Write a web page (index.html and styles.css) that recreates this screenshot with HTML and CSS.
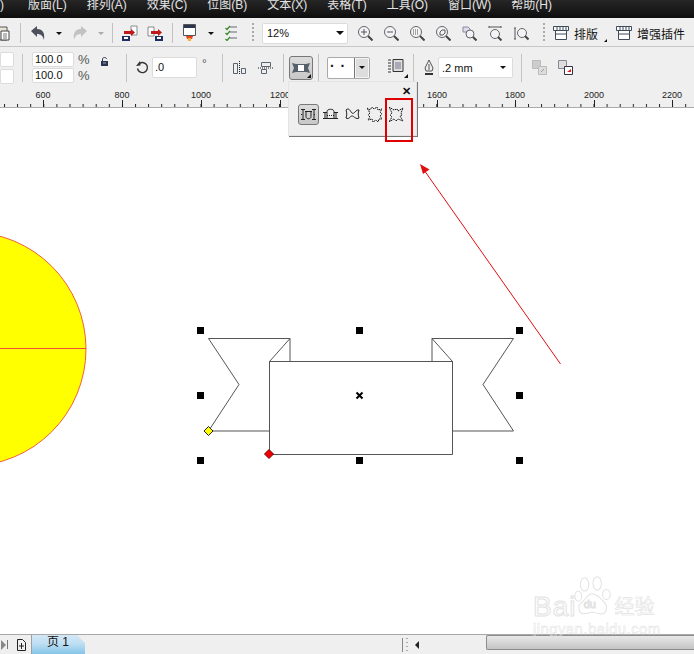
FILE: index.html
```html
<!DOCTYPE html>
<html lang="zh-CN">
<head>
  <meta charset="UTF-8">
  <title>CorelDRAW 变形工具</title>
  <link rel="stylesheet" href="styles.css">
</head>
<body>
  <div class="app">
    <!-- 菜单栏 -->
    <div class="menubar">
      <span class="first">V)</span>
      <span>版面(L)</span>
      <span>排列(A)</span>
      <span>效果(C)</span>
      <span>位图(B)</span>
      <span>文本(X)</span>
      <span>表格(T)</span>
      <span>工具(O)</span>
      <span>窗口(W)</span>
      <span>帮助(H)</span>
    </div>

    <!-- 标准工具栏 -->
    <div class="toolbar top">
      <div class="group g-paste">
        <svg width="10" height="16" viewBox="0 0 10 16"><path d="M-6 2h13v13H-6z" fill="#e8e4d8" stroke="#555"/><path d="M1 6h8v9H1z" fill="#fff" stroke="#444"/><path d="M3 9h4M3 11h4M3 13h4" stroke="#777"/></svg>
      </div>
      <i class="sep"></i>
      <div class="group g-undo">
        <svg width="16" height="16" viewBox="0 0 16 16"><path d="M1 6l6-5v3c6 0 8 4 7 11-1-4-3-6-7-6v3z" fill="#4d4f5c"/></svg>
        <i class="drop"></i>
        <svg width="16" height="16" viewBox="0 0 16 16"><path d="M15 6L9 1v3C3 4 1 8 2 15c1-4 3-6 7-6v3z" fill="#c2c2c2"/></svg>
        <i class="drop off"></i>
      </div>
      <i class="sep"></i>
      <div class="group g-exp">
        <svg width="17" height="17" viewBox="0 0 17 17"><path d="M10 1h6v9h-6z" fill="#fff" stroke="#888"/><path d="M1 11h8v5H1z" fill="#1e2f66"/><path d="M3 12h4v2H3z" fill="#fff"/><path d="M3 6h7V4l4 3.500-4 3.500V9H3z" fill="#c01818"/></svg>
        <svg width="17" height="17" viewBox="0 0 17 17"><path d="M1 2h6v9H1z" fill="#fff" stroke="#888"/><path d="M8 11h8v5H8z" fill="#1e2f66"/><path d="M10 12h4v2h-4z" fill="#fff"/><path d="M4 6h7V4l4 3.500-4 3.500V9H4z" fill="#c01818"/></svg>
      </div>
      <i class="sep"></i>
      <div class="group g-pub">
        <svg width="13" height="18" viewBox="0 0 13 18"><path d="M.5.500h12v11H.5z" fill="#fff" stroke="#555"/><path d="M1 1h11v3H1z" fill="#2c3550"/><path d="M3 12h7l-1 3H4z" fill="#e8431a"/><path d="M5 14h3v3H5z" fill="#f5b13c"/></svg>
        <i class="drop"></i>
        <svg width="12" height="16" viewBox="0 0 12 16" fill="none"><path d="M5 2h7M5 7h7M5 13h7" stroke="#667"/><path d="M.5 3l1.500 1.500L5 1M.5 8l1.500 1.500L5 6M.5 14l1.500 1.500L5 12" stroke="#3d8a2a" stroke-width="1.300"/></svg>
      </div>
      <i class="grip"></i>
      <div class="combo zoom-combo">
        <span>12%</span>
        <i class="drop big"></i>
      </div>
      <div class="group g-zoom">
        <svg class="lens" viewBox="0 0 15 15"><circle cx="6" cy="6" r="5.500"/><path class="h" d="M10 10l4.500 4.500"/><path class="d" d="M3 6h6M6 3v6"/></svg>
        <svg class="lens" viewBox="0 0 15 15"><circle cx="6" cy="6" r="5.500"/><path class="h" d="M10 10l4.500 4.500"/><path class="d" d="M3 6h6"/></svg>
        <svg class="lens" viewBox="0 0 15 15"><circle cx="6" cy="6" r="5.500"/><path class="h" d="M10 10l4.500 4.500"/><path class="d dots" d="M3 4h6M3 6h6M3 8h6"/></svg>
        <svg class="lens" viewBox="0 0 15 15"><circle cx="6" cy="6" r="5.500"/><path class="h" d="M10 10l4.500 4.500"/><path class="d" d="M4 6l2-2 3 0 0 3-2 2-3 0z"/></svg>
        <svg class="lens" viewBox="0 0 15 15"><path d="M1 1h5l2 2v3H1z" fill="#dde" stroke="#889"/><circle cx="8" cy="8" r="4"/><path class="h" d="M11 11l3.500 3.500"/></svg>
        <svg class="lens" viewBox="0 0 15 15"><path class="d" d="M1 1h12M1 0v2M13 0v2"/><circle cx="7" cy="8" r="4.500"/><path class="h" d="M10 11l3.500 3.500"/></svg>
        <svg class="lens" viewBox="0 0 15 15"><path class="d" d="M1 2v11M0 2h2M0 13h2"/><circle cx="8" cy="7" r="4.500"/><path class="h" d="M11 10l3.500 3.500"/></svg>
      </div>
      <i class="grip"></i>
      <div class="group g-plug">
        <svg width="16" height="15" viewBox="0 0 16 15"><path d="M.5.500h15v4H.5zM2.500 4.500h11v9h-11z" fill="#fff" stroke="#3f4a5a"/><path d="M4 1v3M7 1v3M10 1v3M13 1v3M3 8h10" stroke="#3f4a5a"/></svg>
        <span class="plug-text">排版</span>
        <i class="corner"></i>
        <svg width="16" height="15" viewBox="0 0 16 15"><path d="M.5.500h15v4H.5zM2.500 4.500h11v9h-11z" fill="#fff" stroke="#3f4a5a"/><path d="M4 1v3M7 1v3M10 1v3M13 1v3M3 8h10" stroke="#3f4a5a"/></svg>
        <span class="plug-text">增强插件</span>
      </div>
    </div>

    <!-- 属性栏 -->
    <div class="toolbar props">
      <div class="group g-pos">
        <b class="field stub"></b>
        <b class="field stub"></b>
      </div>
      <i class="sep tall"></i>
      <div class="group g-scale">
        <div class="stack">
          <b class="field pct">100.0</b>
          <b class="field pct">100.0</b>
        </div>
        <div class="stack units">
          <span>%</span>
          <span>%</span>
        </div>
        <svg class="lock" width="9" height="9" viewBox="0 0 9 9"><path d="M1 4h7v5H1z" fill="#2c3550"/><path d="M2.500 4V2c0-2 4-2 4 0" fill="none" stroke="#2c3550"/><path d="M3 6h3" stroke="#9ab"/></svg>
      </div>
      <i class="sep tall"></i>
      <div class="group g-rot">
        <svg width="13" height="13" viewBox="0 0 13 13" fill="none"><path d="M3.500 2.500a5 5 0 1 1-2 5" stroke="#333" stroke-width="1.400"/><path d="M0 5l4.500-.500L4 0z" fill="#333"/></svg>
        <b class="field angle">.0</b>
        <span class="deg">°</span>
      </div>
      <i class="sep tall"></i>
      <div class="group g-mirror">
        <svg width="15" height="14" viewBox="0 0 15 14" fill="none" stroke="#5a6470"><path d="M1.500 2.500h4v10h-4zM9.500 7.500h4v5h-4z"/><path d="M7.500 0v14" stroke="#222" stroke-dasharray="1 1"/></svg>
        <svg width="15" height="14" viewBox="0 0 15 14" fill="none" stroke="#5a6470"><path d="M3.500 1.500h9v4h-9zM3.500 8.500h5v4h-5z"/><path d="M0 7h15" stroke="#222" stroke-dasharray="1 1"/></svg>
      </div>
      <i class="sep tall"></i>
      <div class="press">
        <svg width="20" height="14" viewBox="0 0 20 14"><path d="M1 2l4 1h10l4-1-2 5 2 5-4-1H5l-4 1 2-5z" fill="#55606a"/><path d="M7 4h6v6H7z" fill="#fff"/></svg>
        <i class="corner dark"></i>
      </div>
      <i class="sep tall"></i>
      <div class="line-combo">
        <span class="dots-box">· ·</span>
        <span class="line-btn"><i class="drop"></i></span>
      </div>
      <div class="style-btn">
        <svg width="16" height="15" viewBox="0 0 16 15"><path d="M0 1h3M0 4h3M0 7h3M0 10h3M0 13h3" stroke="#333"/><path d="M5 .500h10v12H5z" fill="#ddd" stroke="#333"/><path d="M7 3h6v7H7z" fill="#aab"/></svg>
        <i class="corner dark"></i>
      </div>
      <i class="sep tall"></i>
      <svg class="pen" width="10" height="17" viewBox="0 0 10 17" fill="none"><path d="M5 1l4 8-1 3H2L1 9z" fill="#eee" stroke="#555"/><path d="M5 5v6" stroke="#555"/><path d="M1 15h8" stroke="#333" stroke-width="2"/></svg>
      <div class="combo width-combo">
        <span>.2 mm</span>
        <i class="drop"></i>
      </div>
      <i class="sep tall"></i>
      <div class="group g-order">
        <svg width="15" height="15" viewBox="0 0 15 15"><path d="M.5.500h8v8h-8z" fill="#ccc" stroke="#bbb"/><path d="M6.500 6.500h8v8h-8z" fill="#ddd" stroke="#bbb"/><path d="M9 12l3-3" stroke="#999"/></svg>
        <svg width="15" height="15" viewBox="0 0 15 15"><path d="M.5.500h8v8h-8z" fill="#ddd" stroke="#889"/><path d="M6.500 6.500h8v8h-8z" fill="#fff" stroke="#334"/><path d="M9 12h4V9z" fill="#e02020"/></svg>
      </div>
    </div>

    <!-- 标尺 -->
    <svg class="ruler" width="694" height="20" viewBox="0 0 694 20">
      <defs>
        <pattern id="ticks" x="4" y="0" width="13.1" height="20" patternUnits="userSpaceOnUse">
          <path d="M.5 16v3" stroke="#222"/>
        </pattern>
      </defs>
      <path d="M0 0h694v20H0z" fill="#efefef"/>
      <path d="M0 0h694v20H0z" fill="url(#ticks)"/>
      <path d="M0 19.500h694" stroke="#aaa"/>
      <path d="M43.500 12v7M122.500 12v7M201.500 12v7M280.500 12v7M437.500 12v7M515.500 12v7M594.500 12v7M672.500 12v7" stroke="#222"/>
      <g class="ruler-text">
        <text x="43" y="10">600</text>
        <text x="122" y="10">800</text>
        <text x="201" y="10">1000</text>
        <text x="280" y="10">1200</text>
        <text x="437" y="10">1600</text>
        <text x="515" y="10">1800</text>
        <text x="594" y="10">2000</text>
        <text x="672" y="10">2200</text>
      </g>
    </svg>

    <!-- 绘图区 -->
    <svg class="canvas" width="694" height="526" viewBox="0 108 694 526">
      <circle cx="-31" cy="349" r="117" fill="#ffff00" stroke="#f0603a"/>
      <path d="M0 348.500h86" stroke="#f0503a"/>

      <g fill="#fff" stroke="#555">
        <path d="M208.500 338.500H290v23h-20.500V431h-61l30.500-46.500z"/>
        <path d="M513.500 338.500H432v23h20.500V431h61L483 384.500z"/>
        <path d="M269.500 361.500L290 338.500M452.500 361.500L432 338.500" fill="none"/>
        <path d="M269.500 361.500h183v93h-183z"/>
      </g>

      <g fill="#000">
        <path d="M197 327h7v7h-7zM356 327h7v7h-7zM516 327h7v7h-7zM197 392h7v7h-7zM516 392h7v7h-7zM197 457h7v7h-7zM356 457h7v7h-7zM516 457h7v7h-7z"/>
      </g>
      <path d="M356.500 392.500l6 6M362.500 392.500l-6 6" stroke="#000" stroke-width="2"/>
      <path d="M208.500 426.500l4.500 4.500-4.500 4.500-4.500-4.500z" fill="#ffff00" stroke="#222"/>
      <path d="M269 449.500l4.500 4.500-4.500 4.500-4.500-4.500z" fill="#f00000" stroke="#700"/>

      <path d="M560.500 364L424 170" stroke="#e01010"/>
      <path d="M420 164l9.500 5.500-6.500 4.500z" fill="#e01010"/>
    </svg>

    <!-- 页面标签栏 -->
    <div class="statusbar">
      <i class="play"></i>
      <i class="play-bar"></i>
      <svg class="add-page" width="9" height="12" viewBox="0 0 9 12" fill="none" stroke="#222"><path d="M.500.500h5l3 3v8h-8z"/><path d="M4.500 4v6M2 7h5"/></svg>
      <div class="page-tab">页 1</div>
      <div class="hscroll">
        <i class="hgrip"></i>
        <i class="harrow"></i>
        <div class="hthumb"></div>
      </div>
    </div>

    <!-- 弹出的变形面板 -->
    <div class="popup">
      <span class="popup-close">✕</span>
      <div class="popup-row">
        <span class="popup-btn active">
          <svg width="17" height="14" viewBox="0 0 17 14" fill="none" stroke="#222"><path d="M1 1.500h4M12 1.500h4M3 1.500v10M14 1.500v10M1 11.500h4M12 11.500h4"/><path d="M5 3.500h7M6 3.500v5c0 3 5 3 5 0v-5"/><path d="M1 6.500h2M14 6.500h2" stroke-dasharray="1 1"/></svg>
        </span>
        <span class="popup-btn">
          <svg width="15" height="13" viewBox="0 0 15 13" fill="none" stroke="#222"><path d="M0 4.500h4M11 4.500h4M2 4.500v6M13 4.500v6M0 10.500h15"/><path d="M4 10.500v-7c0-3 7-3 7 0v7"/><path d="M4 7.500h7" stroke-dasharray="1 1"/></svg>
        </span>
        <span class="popup-btn">
          <svg width="15" height="15" viewBox="0 0 15 15" fill="none" stroke="#222"><path d="M1 3c3-3 4 1 6 3s4-4 7-3c-1 3-1 5 0 8-3 2-5-2-7-2s-3 4-6 2c1-3 1-5 0-8z"/></svg>
        </span>
        <span class="popup-btn">
          <svg width="15" height="15" viewBox="0 0 15 15" fill="none" stroke="#111" stroke-dasharray="1.500 .7"><path d="M0 1l3 2 2-3 2 2 3-2 1 3 4-1-2 3 2 2-2 2 2 3-3 0-1 3-2-2-3 2-1-3-4 1 2-3-2-2 2-2z"/></svg>
        </span>
        <span class="popup-btn">
          <svg width="15" height="15" viewBox="0 0 15 15" fill="none" stroke="#111" stroke-dasharray="1.500 .7"><path d="M0 0l5 3 3-1 1 2 5-3-2 5 1 2-2 1 3 5-5-2-2 2-2-2-5 3 3-5-2-2 2-2z"/></svg>
        </span>
      </div>
    </div>

    <!-- 红色标注框 -->
    <div class="mark"></div>

    <!-- 水印 -->
    <div class="watermark">
      <div class="wm-logo">
        <span class="wm-bai">Bai</span>
        <svg class="wm-paw" width="38" height="42" viewBox="0 0 44 50" fill="none" stroke="#e2e2e2" stroke-width="1.200">
          <ellipse cx="12" cy="10" rx="5" ry="8"/>
          <ellipse cx="27" cy="9" rx="5" ry="8"/>
          <ellipse cx="4.500" cy="24" rx="4" ry="6"/>
          <ellipse cx="38" cy="22" rx="4.500" ry="6"/>
          <path d="M21 21c-6 0-8 8-13 11s-3 13 3 13 7-2 10-2 7 3 12 2 7-9 3-13-8-11-15-11z"/>
          <text x="11" y="38">du</text>
        </svg>
        <span class="wm-cn">经验</span>
      </div>
      <div class="wm-url">jingyan.baidu.com</div>
    </div>
  </div>
</body>
</html>
```

FILE: styles.css
```css
* {
  box-sizing: border-box;
}
html, body {
  margin: 0;
  padding: 0;
  background: #fff;
}
.app {
  position: relative;
  width: 694px;
  height: 654px;
  overflow: hidden;
  display: flex;
  flex-direction: column;
  font-family: "Liberation Sans", "Noto Sans CJK SC", sans-serif;
  color: #111;
}
i, b {
  display: block;
  font-style: normal;
  font-weight: normal;
  flex: none;
}
svg {
  display: block;
  flex: none;
}

/* 菜单栏 */
.menubar {
  height: 18px;
  flex: none;
  display: flex;
  gap: 20px;
  overflow: hidden;
  background: linear-gradient(#262626, #0e0e0e);
  color: #e4e4e4;
  font-size: 12px;
  line-height: 10px;
  white-space: nowrap;
}
.menubar .first {
  margin-left: -8px;
  margin-right: 4px;
}

/* 工具栏 */
.toolbar {
  flex: none;
  display: flex;
  align-items: center;
  background: #efefef;
}
.toolbar.top {
  height: 29px;
  padding-top: 2px;
  border-bottom: 1px solid #c6c6c6;
}
.toolbar.props {
  height: 41px;
}
.group {
  display: flex;
  align-items: center;
}
.sep {
  width: 1px;
  height: 20px;
  background: #c2c2c2;
}
.sep.tall {
  height: 28px;
}
.grip {
  width: 2px;
  height: 20px;
  margin-left: 15px;
  background: repeating-linear-gradient(#aaa 0 2px, transparent 2px 4px);
}
.g-zoom + .grip {
  margin-left: 14px;
}
.drop {
  width: 0;
  height: 0;
  border-left: 3px solid transparent;
  border-right: 3px solid transparent;
  border-top: 3px solid #111;
}
.drop.off {
  border-top-color: #aaa;
}
.drop.big {
  border-left-width: 4px;
  border-right-width: 4px;
  border-top-width: 4px;
}
.corner {
  width: 0;
  height: 0;
  border-left: 4px solid transparent;
  border-bottom: 4px solid #111;
}
.combo, .field, .line-combo {
  background: #fff;
  border: 1px solid #dcdcdc;
  border-radius: 2px;
  font-size: 11px;
}
.combo {
  display: flex;
  align-items: center;
  justify-content: space-between;
}

/* 标准工具栏 */
.g-paste {
  width: 20px;
}
.g-undo {
  padding: 0 9px;
  gap: 10px;
  width: 91px;
}
.g-exp {
  padding-left: 8px;
  gap: 9px;
  width: 59px;
}
.g-pub {
  padding-left: 10px;
  gap: 12px;
}
.g-pub .drop {
  margin-right: -1px;
}
.zoom-combo {
  width: 86px;
  height: 21px;
  margin-left: 8px;
  padding: 0 3px 0 4px;
}
.g-zoom {
  gap: 11px;
  margin-left: 10px;
}
.lens {
  width: 15px;
  height: 15px;
  fill: none;
}
.lens circle {
  stroke: #666;
  fill: #f4f4f8;
}
.lens .h {
  stroke: #444;
  stroke-width: 2;
}
.lens .d {
  stroke: #555;
}
.lens .dots {
  stroke-dasharray: 1 1;
}
.g-plug {
  margin-left: 8px;
}
.plug-text {
  margin-left: 5px;
  font-size: 12px;
  white-space: nowrap;
}
.g-plug .corner {
  align-self: flex-end;
  margin: 0 9px 0 6px;
  border-width: 0 0 3px 3px;
}

/* 属性栏 */
.g-pos {
  width: 22px;
  flex-direction: column;
  align-items: flex-start;
  gap: 2px;
}
.stub {
  width: 14px;
  height: 15px;
}
.g-scale {
  padding-left: 9px;
  width: 103px;
}
.stack {
  display: flex;
  flex-direction: column;
  gap: 1px;
}
.field.pct {
  width: 42px;
  height: 15px;
  padding-left: 2px;
  line-height: 13px;
}
.units {
  margin-left: 4px;
  color: #555;
  font-size: 13px;
  line-height: 15px;
}
.lock {
  margin: 0 0 13px 10px;
}
.g-rot {
  padding-left: 9px;
  width: 95px;
}
.field.angle {
  width: 45px;
  height: 21px;
  margin-left: 3px;
  padding-left: 2px;
  line-height: 19px;
}
.deg {
  margin-left: 5px;
  color: #555;
  font-size: 12px;
  line-height: 12px;
  margin-top: -8px;
}
.g-mirror {
  padding-left: 9px;
  gap: 11px;
  width: 60px;
}
.press {
  position: relative;
  width: 24px;
  height: 24px;
  margin: 0 5px;
  display: flex;
  align-items: center;
  justify-content: center;
  background: linear-gradient(#dcdcdc, #c8c8c8);
  border: 1px solid #777;
  border-radius: 3px;
}
.corner.dark {
  position: absolute;
  right: 1px;
  bottom: 1px;
}
.line-combo {
  display: flex;
  width: 43px;
  height: 22px;
  margin-left: 8px;
  border-color: #aaa;
}
.dots-box {
  width: 26px;
  padding-left: 2px;
  font-size: 14px;
  font-weight: bold;
  line-height: 17px;
  letter-spacing: 1px;
}
.line-btn {
  flex: 1;
  display: flex;
  align-items: center;
  justify-content: center;
  background: #ddd;
  border-left: 1px solid #777;
  box-shadow: inset 0 0 0 1px #f4f4f4;
}
.style-btn {
  position: relative;
  width: 20px;
  height: 20px;
  margin: 0 5px 0 18px;
  padding-top: 1px;
}
.style-btn .corner.dark {
  right: 0;
  bottom: 0;
}
.pen {
  margin-left: 10px;
}
.width-combo {
  width: 75px;
  height: 21px;
  margin: 0 8px 0 4px;
  padding: 0 6px 0 3px;
}
.g-order {
  padding-left: 10px;
  gap: 11px;
}

/* 标尺 */
.ruler {
  flex: none;
}
.ruler-text {
  font-size: 9px;
  font-family: "Liberation Sans", sans-serif;
  text-anchor: middle;
  fill: #222;
}

/* 绘图区 */
.canvas {
  flex: none;
  background: #fff;
}

/* 页面标签栏 */
.statusbar {
  flex: 1;
  display: flex;
  align-items: center;
  background: #efefef;
  border-top: 1px solid #a8a8a8;
}
.play {
  width: 0;
  height: 0;
  margin-left: 1px;
  border-left: 5px solid #888;
  border-top: 5px solid transparent;
  border-bottom: 5px solid transparent;
}
.play-bar {
  width: 1px;
  height: 9px;
  margin-left: 1px;
  background: #777;
}
.add-page {
  margin-left: 9px;
}
.page-tab {
  align-self: stretch;
  width: 54px;
  margin-left: 5px;
  padding-left: 15px;
  background: linear-gradient(#d4e8f6, #bfdff3 45%, #85c4e8);
  border-left: 1px solid #a0a0a0;
  clip-path: polygon(0 0, 46px 0, 100% 8px, 100% 100%, 0 100%);
  font-size: 12px;
  line-height: 15px;
}
.hscroll {
  align-self: stretch;
  display: flex;
  align-items: center;
  margin-left: auto;
  width: 292px;
}
.hgrip {
  width: 6px;
  height: 14px;
  border-left: 1px solid #888;
  background: repeating-linear-gradient(#aaa 0 1px, transparent 1px 4px) no-repeat 3px 0 / 2px 100%;
}
.harrow {
  width: 0;
  height: 0;
  margin-left: 7px;
  border-right: 4px solid #222;
  border-top: 4px solid transparent;
  border-bottom: 4px solid transparent;
}
.hthumb {
  height: 15px;
  margin-left: auto;
  width: 208px;
  align-self: flex-start;
  background: linear-gradient(#e8e8e8, #c4c4c4);
  border: 1px solid #8c8c8c;
  border-right: 0;
  border-radius: 2px 0 0 2px;
}

/* 弹出面板 */
.popup {
  position: absolute;
  left: 288px;
  top: 81px;
  width: 129px;
  height: 55px;
  background: #efefef;
  border: 1px solid #e4e4e4;
  box-shadow: 1px 1px 0 #777;
}
.popup-close {
  position: absolute;
  right: 5px;
  top: 3px;
  font-size: 11px;
  font-weight: bold;
  line-height: 12px;
}
.popup-row {
  display: flex;
  align-items: center;
  gap: 1px;
  margin: 22px 0 0 9px;
}
.popup-btn {
  width: 21px;
  height: 21px;
  display: flex;
  align-items: center;
  justify-content: center;
  border-radius: 3px;
}
.popup-btn.active {
  background: linear-gradient(#dcdcdc, #c8c8c8);
  border: 1px solid #777;
}

/* 标注框 */
.mark {
  position: absolute;
  left: 385px;
  top: 98px;
  width: 28px;
  height: 44px;
  border: 2px solid #e00000;
}

/* 水印 */
.watermark {
  position: absolute;
  left: 533px;
  top: 576px;
  width: 124px;
  color: transparent;
  -webkit-text-stroke: 1px #e2e2e2;
}
.wm-logo {
  display: flex;
  align-items: flex-end;
  height: 44px;
}
.wm-bai {
  font-size: 28px;
  line-height: 30px;
  letter-spacing: 1px;
  margin-bottom: -2px;
}
.wm-paw {
  margin-left: -2px;
  align-self: flex-start;
}
.wm-paw text {
  font-size: 13px;
  -webkit-text-stroke: .5px #e2e2e2;
}
.wm-cn {
  margin-left: 2px;
  font-size: 20px;
  line-height: 26px;
  white-space: nowrap;
  -webkit-text-stroke: .6px #e2e2e2;
}
.wm-url {
  margin-top: 0;
  font-size: 15px;
  line-height: 17px;
  white-space: nowrap;
  letter-spacing: .4px;
  -webkit-text-stroke: .5px #e2e2e2;
}
```
